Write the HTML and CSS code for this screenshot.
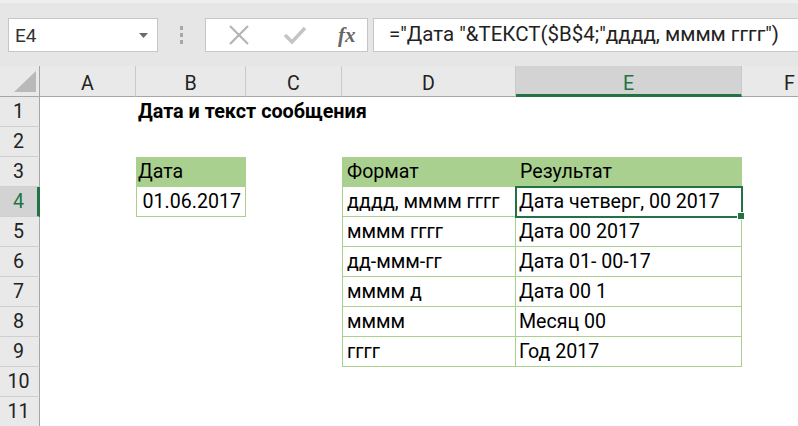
FILE: index.html
```html
<!DOCTYPE html>
<html lang="ru">
<head>
<meta charset="utf-8">
<link rel="stylesheet" href="styles.css">
</head>
<body>
<div class="app">
  <div class="toolbar">
    <div class="namebox">
      <span class="namebox-text">E4</span>
      <svg class="dropdown" width="9" height="5" viewBox="0 0 9 5"><path d="M0 0H9L4.5 5Z" fill="#6a6a6a"/></svg>
    </div>
    <div class="grip"><span></span><span></span><span></span></div>
    <div class="fbuttons">
      <svg class="ico-x" width="22" height="22" viewBox="0 0 22 22"><path d="M2 2L20 20M20 2L2 20" stroke="#b4b4b4" stroke-width="2.2" fill="none"/></svg>
      <svg class="ico-check" width="24" height="20" viewBox="0 0 24 20"><path d="M2 10L9 17L22 3" stroke="#c4c4c4" stroke-width="3.4" fill="none"/></svg>
      <span class="fx">fx</span>
    </div>
    <div class="formula">="Дата "&amp;ТЕКСТ($B$4;"дддд, мммм гггг")</div>
  </div>
  <div class="sheet">
    <div class="corner"><svg width="22" height="21" viewBox="0 0 22 21"><path d="M22 0V21H0Z" fill="#b9b9b9"/></svg></div>
    <div class="colhead">A</div>
    <div class="colhead">B</div>
    <div class="colhead">C</div>
    <div class="colhead">D</div>
    <div class="colhead active">E</div>
    <div class="colhead">F</div>

    <div class="rowhead r1">1</div>
    <div class="rowhead r2">2</div>
    <div class="rowhead r3">3</div>
    <div class="rowhead r4 active">4</div>
    <div class="rowhead r5">5</div>
    <div class="rowhead r6">6</div>
    <div class="rowhead r7">7</div>
    <div class="rowhead r8">8</div>
    <div class="rowhead r9">9</div>
    <div class="rowhead r10">10</div>
    <div class="rowhead r11">11</div>

    <div class="cell title">Дата и текст сообщения</div>

    <div class="cell hdr b3">Дата</div>
    <div class="cell val b4">01.06.2017</div>

    <div class="cell hdr d r3c">Формат</div>
    <div class="cell hdr e r3c">Результат</div>

    <div class="cell td d r4c">дддд, мммм гггг</div>
    <div class="cell td e r4c selected">Дата четверг, 00 2017</div>
    <div class="cell td d r5c">мммм гггг</div>
    <div class="cell td e r5c">Дата 00 2017</div>
    <div class="cell td d r6c">дд-ммм-гг</div>
    <div class="cell td e r6c">Дата 01- 00-17</div>
    <div class="cell td d r7c">мммм д</div>
    <div class="cell td e r7c">Дата 00 1</div>
    <div class="cell td d r8c">мммм</div>
    <div class="cell td e r8c">Месяц 00</div>
    <div class="cell td d r9c">гггг</div>
    <div class="cell td e r9c">Год 2017</div>
  </div>
</div>
</body>
</html>
```

FILE: styles.css
```css
html, body {
  margin: 0;
  padding: 0;
  background: #ffffff;
}
.app {
  width: 798px;
  height: 426px;
  overflow: hidden;
  font-family: Roboto, "Noto Sans", sans-serif;
  color: #000;
}
.toolbar {
  height: 66px;
  box-sizing: border-box;
  background: #e6e6e6;
  border-top: 3px solid #efefef;
  padding: 15px 0 0 8px;
  display: flex;
  align-items: flex-start;
}
.namebox {
  width: 150px;
  height: 34px;
  box-sizing: border-box;
  background: #fff;
  border: 1px solid #c6c6c6;
  display: flex;
  align-items: center;
  justify-content: space-between;
  padding: 0 9px 0 6px;
}
.namebox-text {
  font-size: 19px;
  color: #333;
}
.dropdown {
  margin-top: 1px;
}
.grip {
  width: 47px;
  height: 34px;
  display: flex;
  flex-direction: column;
  align-items: center;
  justify-content: center;
  gap: 3px;
}
.grip span {
  width: 3px;
  height: 4px;
  background: #a8a8a8;
}
.fbuttons {
  width: 163px;
  height: 34px;
  box-sizing: border-box;
  background: #fff;
  border: 1px solid #c6c6c6;
  display: flex;
  align-items: center;
  padding-left: 22px;
}
.ico-x {
  margin-right: 33px;
}
.ico-check {
  margin-right: 31px;
}
.fx {
  font-family: "Liberation Serif", "DejaVu Serif", serif;
  font-style: italic;
  font-weight: bold;
  font-size: 21px;
  color: #666;
}
.formula {
  margin-left: 5px;
  flex: 1;
  height: 34px;
  box-sizing: border-box;
  background: #fff;
  border: 1px solid #c6c6c6;
  border-right: none;
  padding-left: 15px;
  font-size: 20.5px;
  line-height: 31px;
  color: #222;
  white-space: nowrap;
}
.sheet {
  display: grid;
  grid-template-columns: 40px 96px 110px 96px 174px 226px 96px;
  grid-template-rows: 31px repeat(11, 30px);
  font-size: 19.6px;
}
.corner {
  grid-column: 1;
  grid-row: 1;
  background: #e9e9e9;
  border-right: 1px solid #a6a6a6;
  border-bottom: 1px solid #a6a6a6;
  display: flex;
  align-items: flex-end;
  justify-content: flex-end;
  padding: 0 3px 4px 0;
}
.colhead {
  grid-row: 1;
  background: #e9e9e9;
  border-right: 1px solid #c9c9c9;
  border-bottom: 1px solid #a6a6a6;
  display: flex;
  align-items: center;
  justify-content: center;
  padding-top: 4px;
  color: #222;
  box-sizing: border-box;
}
.colhead.active {
  background: #d3d3d3;
  color: #217346;
  border-bottom: 3px solid #217346;
  padding-top: 6px;
}
.rowhead {
  grid-column: 1;
  background: #e9e9e9;
  border-right: 1px solid #a6a6a6;
  border-bottom: 1px solid #cfcfcf;
  display: flex;
  align-items: center;
  justify-content: center;
  padding-right: 2px;
  color: #222;
  box-sizing: border-box;
}
.rowhead.active {
  background: #d3d3d3;
  color: #217346;
  border-right: 3px solid #217346;
  padding-right: 0;
}
.r1 { grid-row: 2; }
.r2 { grid-row: 3; }
.r3 { grid-row: 4; }
.r4 { grid-row: 5; }
.r5 { grid-row: 6; }
.r6 { grid-row: 7; }
.r7 { grid-row: 8; }
.r8 { grid-row: 9; }
.r9 { grid-row: 10; }
.r10 { grid-row: 11; }
.r11 { grid-row: 12; }

.cell {
  display: flex;
  align-items: flex-end;
  padding-bottom: 4px;
  box-sizing: border-box;
  white-space: nowrap;
}
.title {
  grid-column: 3 / 6;
  grid-row: 2;
  font-weight: bold;
  font-size: 19.8px;
  padding-left: 2px;
}
.hdr {
  background: #a9d08e;
}
.b3 {
  grid-column: 3;
  grid-row: 4;
  padding-left: 2px;
}
.b4 {
  grid-column: 3;
  grid-row: 5;
  border: 1px solid #a9d08e;
  border-top: none;
  justify-content: flex-end;
  padding-right: 4px;
  padding-bottom: 3px;
}
.d {
  grid-column: 5;
  padding-left: 5px;
}
.e {
  grid-column: 6;
  padding-left: 4px;
}
.td {
  border-bottom: 1px solid #a9d08e;
  padding-bottom: 3px;
}
.td.d {
  border-left: 1px solid #a9d08e;
  border-right: 1px solid #a9d08e;
  padding-left: 4px;
}
.td.e {
  border-right: 1px solid #a9d08e;
  padding-left: 3px;
}
.r3c { grid-row: 4; }
.r4c { grid-row: 5; }
.r5c { grid-row: 6; }
.r6c { grid-row: 7; }
.r7c { grid-row: 8; }
.r8c { grid-row: 9; }
.r9c { grid-row: 10; }
.selected {
  position: relative;
  outline: 2px solid #217346;
  outline-offset: -1px;
}
.selected::after {
  content: "";
  position: absolute;
  right: -4px;
  bottom: -4px;
  width: 6px;
  height: 6px;
  background: #217346;
  border: 1px solid #fff;
}
```
